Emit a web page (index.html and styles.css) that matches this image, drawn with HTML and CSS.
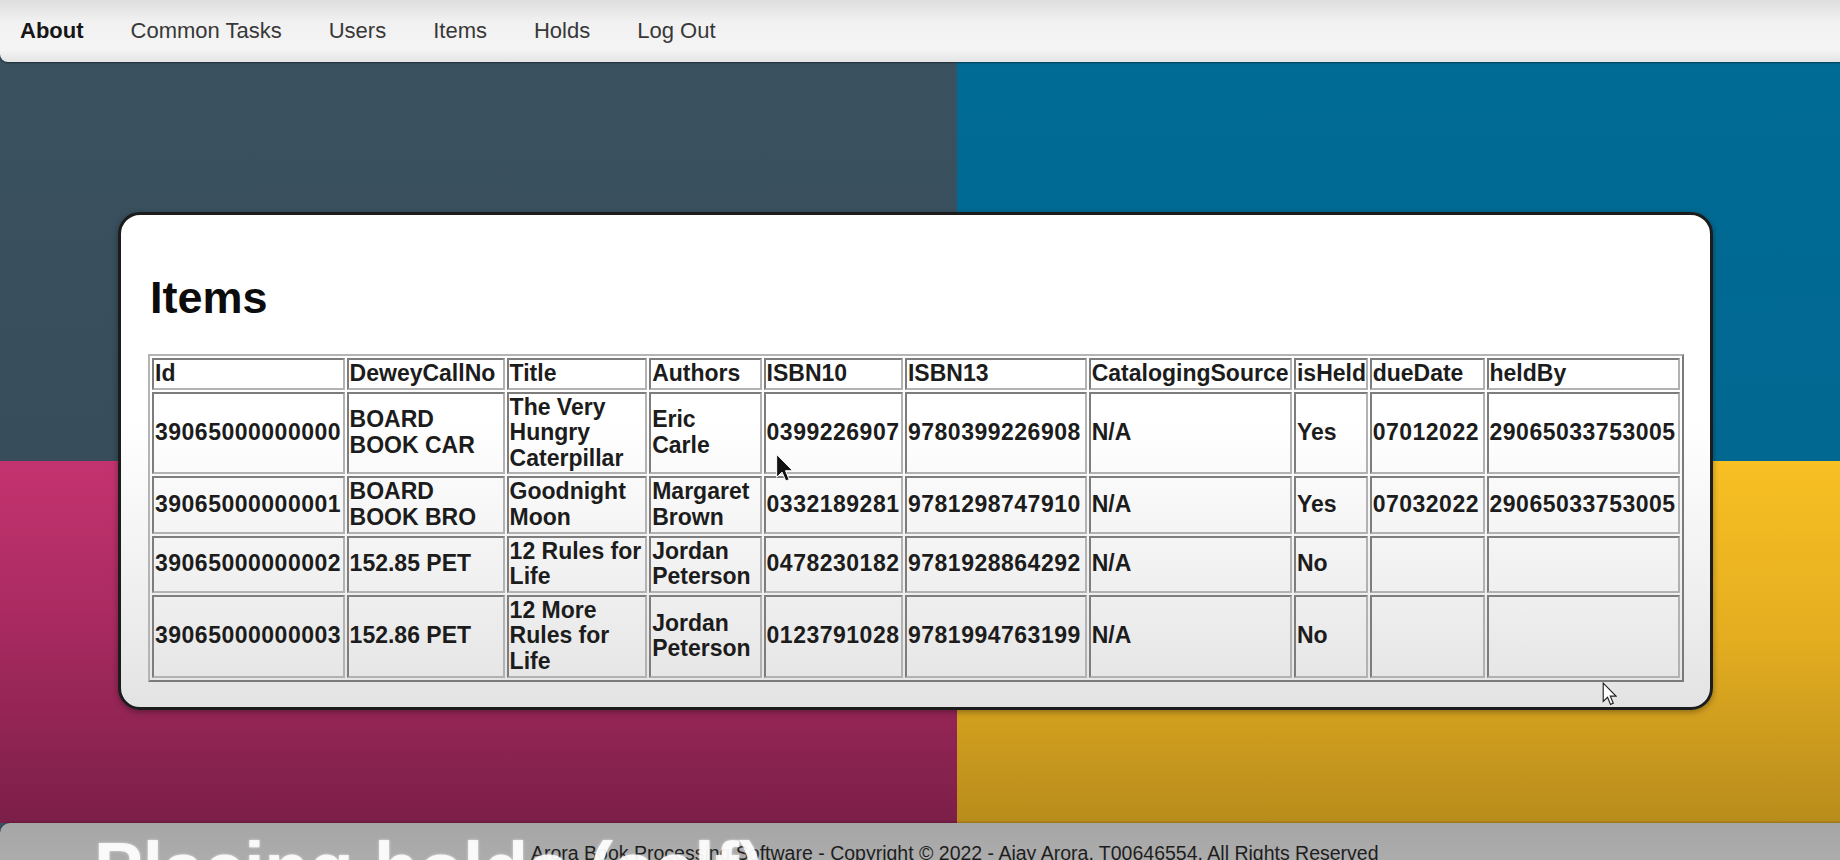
FILE: index.html
```html
<!DOCTYPE html>
<html lang="en">
<head>
<meta charset="utf-8">
<title>Items</title>
<link rel="stylesheet" href="styles.css">
</head>
<body>
<nav class="topnav">
  <a class="nav-link active" href="#">About</a>
  <a class="nav-link" href="#">Common Tasks</a>
  <a class="nav-link" href="#">Users</a>
  <a class="nav-link" href="#">Items</a>
  <a class="nav-link" href="#">Holds</a>
  <a class="nav-link" href="#">Log Out</a>
</nav>
<main class="stage">
  <section class="card">
    <h1 class="card-title">Items</h1>
    <table class="items">
      <colgroup>
        <col class="c-id"><col class="c-dewey"><col class="c-title"><col class="c-authors"><col class="c-isbn10"><col class="c-isbn13"><col class="c-source"><col class="c-held"><col class="c-due"><col class="c-by">
      </colgroup>
      <thead>
        <tr><th>Id</th><th>DeweyCallNo</th><th>Title</th><th>Authors</th><th>ISBN10</th><th>ISBN13</th><th>CatalogingSource</th><th>isHeld</th><th>dueDate</th><th>heldBy</th></tr>
      </thead>
      <tbody>
        <tr><td class="num">39065000000000</td><td>BOARD BOOK CAR</td><td>The Very Hungry Caterpillar</td><td>Eric Carle</td><td class="num">0399226907</td><td class="num">9780399226908</td><td>N/A</td><td>Yes</td><td class="num">07012022</td><td class="num">29065033753005</td></tr>
        <tr><td class="num">39065000000001</td><td>BOARD BOOK BRO</td><td>Goodnight Moon</td><td>Margaret Brown</td><td class="num">0332189281</td><td class="num">9781298747910</td><td>N/A</td><td>Yes</td><td class="num">07032022</td><td class="num">29065033753005</td></tr>
        <tr><td class="num">39065000000002</td><td>152.85 PET</td><td>12 Rules for Life</td><td>Jordan Peterson</td><td class="num">0478230182</td><td class="num">9781928864292</td><td>N/A</td><td>No</td><td></td><td></td></tr>
        <tr><td class="num">39065000000003</td><td>152.86 PET</td><td>12 More Rules for Life</td><td>Jordan Peterson</td><td class="num">0123791028</td><td class="num">9781994763199</td><td>N/A</td><td>No</td><td></td><td></td></tr>
      </tbody>
    </table>
  </section>
</main>
<footer class="footer">
  <p class="footer-text">Arora Book Processing Software - Copyright © 2022 - Ajay Arora, T00646554. All Rights Reserved</p>
  <div class="caption">Placing holds (self)</div>
</footer>
<svg class="cursor cursor-dark" width="19" height="30" viewBox="0 0 13 21"><path d="M1 1 L1 17 L4.8 13.4 L7.4 19.6 L9.8 18.6 L7.2 12.4 L12.2 12.4 Z" fill="#111" stroke="#fff" stroke-width="0.7"/></svg>
<svg class="cursor cursor-light" width="15" height="24" viewBox="0 0 13 21"><path d="M1 1 L1 17 L4.8 13.4 L7.4 19.6 L9.8 18.6 L7.2 12.4 L12.2 12.4 Z" fill="#fff" stroke="#222" stroke-width="1"/></svg>
</body>
</html>
```
FILE: styles.css
```css
html, body {
  margin: 0;
  padding: 0;
}
body {
  width: 1840px;
  height: 860px;
  overflow: hidden;
  position: relative;
  background: #38505f;
  font-family: "Liberation Sans", Arial, sans-serif;
}

/* top navigation */
.topnav {
  height: 62px;
  display: flex;
  align-items: center;
  gap: 47px;
  padding: 0 0 1px 20px;
  box-sizing: border-box;
  background: linear-gradient(180deg, #dedede 0%, #f1f1f1 35%, #f4f4f4 80%, #e4e4e4 100%);
  border-bottom-left-radius: 8px;
  box-shadow: 0 1px 2px rgba(0,0,0,0.45);
  position: relative;
  z-index: 2;
}
.nav-link {
  font-size: 22px;
  color: #383838;
  text-decoration: none;
}
.nav-link.active {
  font-weight: bold;
  color: #161616;
}

/* coloured backdrop */
.stage {
  height: 761px;
  box-sizing: border-box;
  padding: 150px 0 0 118px;
  background:
    linear-gradient(180deg, #3a5160, #374d5b) 0 0 / 957px 399px no-repeat,
    linear-gradient(180deg, #006b95, #016891) 957px 0 / 883px 399px no-repeat,
    linear-gradient(180deg, #c4336f 0%, #a82a60 45%, #7b1f48 100%) 0 399px / 957px 362px no-repeat,
    linear-gradient(180deg, #f8c023 0%, #e3ad20 50%, #b88c1c 100%) 957px 399px / 883px 362px no-repeat;
}

/* card */
.card {
  width: 1595px;
  box-sizing: border-box;
  padding: 57px 27px 25px 27px;
  border: 3px solid #1c1c1c;
  border-radius: 22px;
  background: linear-gradient(180deg, #ffffff 0%, #ffffff 42%, #f0f0f0 75%, #e3e3e3 100%);
  box-shadow: 0 2px 6px rgba(0,0,0,0.35);
}
.card-title {
  margin: 0 0 30px 0;
  font-size: 45px;
  line-height: 52px;
  font-weight: bold;
  color: #0c0c0c;
  padding-left: 2px;
}

/* table */
.items {
  width: 100%;
  table-layout: fixed;
  border-collapse: separate;
  border-spacing: 2px;
  border: 2px solid;
  border-color: #b4b4b4 #7a7a7a #7a7a7a #b4b4b4;
  font-size: 23px;
  line-height: 25.6px;
  font-weight: bold;
  color: #1c1c1c;
}
.items th,
.items td {
  padding: 1px;
  border: 2px solid;
  border-color: #7d7d7d #b2b2b2 #b2b2b2 #7d7d7d;
  text-align: left;
  vertical-align: middle;
  overflow: visible;
  white-space: normal;
}
.items th { font-weight: bold; }
.items .num { letter-spacing: 0.5px; }
.c-id { width: 192.6px; }
.c-dewey { width: 158px; }
.c-title { width: 140.6px; }
.c-authors { width: 112.4px; }
.c-isbn10 { width: 139.4px; }
.c-isbn13 { width: 181.7px; }
.c-source { width: 203.3px; }
.c-held { width: 73.7px; }
.c-due { width: 114.9px; }
.c-by { width: 193.3px; }

/* footer */
.footer {
  height: 37px;
  position: relative;
  overflow: hidden;
  background: linear-gradient(180deg, #a6a6a6, #acacac);
  border-top-left-radius: 10px;
  box-shadow: 0 -1px 2px rgba(0,0,0,0.2);
}
.footer-text {
  margin: 0;
  padding: 19px 0 0 531px;
  font-size: 19.5px;
  line-height: 22px;
  color: #1e1e1e;
  white-space: nowrap;
}
.caption {
  position: absolute;
  left: 94px;
  top: 8px;
  font-size: 73px;
  line-height: 73px;
  font-weight: bold;
  color: rgba(255,255,255,0.85);
  white-space: nowrap;
  text-shadow: 0 0 3px rgba(255,255,255,0.6);
}

/* pointer overlays */
.cursor {
  position: absolute;
  z-index: 5;
}
.cursor-dark { left: 775px; top: 453px; }
.cursor-light { left: 1602px; top: 682px; }
```
